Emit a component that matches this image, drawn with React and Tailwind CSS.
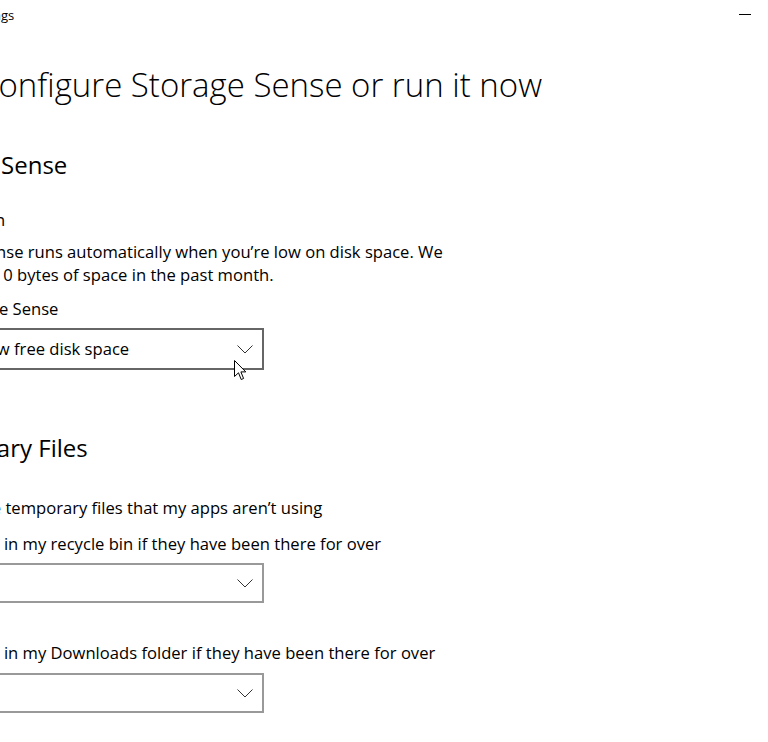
import React from "react";

function Chevron() {
  return (
    <svg width="16" height="9" viewBox="0 0 16 9" className="shrink-0">
      <path d="M0.5 0.5 L8 8 L15.5 0.5" fill="none" stroke="#333" strokeWidth="1" />
    </svg>
  );
}

function Dropdown({ value, hover }) {
  return (
    <div
      className={
        "flex items-center justify-between w-[350px] pl-[10px] pr-[9px] bg-white border-2 " +
        (hover ? "h-[42px] border-[#666666]" : "h-[40px] border-[#999999]")
      }
    >
      <span className="text-[16.6px] text-black whitespace-nowrap">{value}</span>
      <Chevron />
    </div>
  );
}

function Cursor() {
  return (
    <svg width="13" height="21" viewBox="0 0 13 21" className="absolute left-[234px] top-[360px]">
      <path
        d="M0.5 0.5 L0.5 16.5 L4.5 12.8 L7.2 19.5 L9.6 18.5 L6.9 11.9 L11.8 11.9 Z"
        fill="#fff"
        stroke="#000"
        strokeWidth="1"
      />
    </svg>
  );
}

export default function App() {
  return (
    <div
      className="relative w-[768px] h-[742px] overflow-hidden bg-white text-black"
      style={{ fontFamily: '"Open Sans", "Noto Sans", sans-serif' }}
    >
      {/* title bar */}
      <div className="flex justify-between items-center h-[32px]">
        <span className="-ml-[34px] text-[13px] whitespace-nowrap">Settings</span>
        <div className="w-[46px] h-[32px] flex items-center justify-center">
          <div className="w-[12px] h-px bg-black -mt-[3px]" />
        </div>
      </div>

      {/* page title */}
      <h1 className="-ml-[22px] mt-[33px] text-[33px] leading-[40px] font-light whitespace-nowrap">
        Configure Storage Sense or run it now
      </h1>

      <div className="-ml-[86px] flex flex-col">
        <h2 className="-ml-[5px] mt-[44px] text-[24px] leading-[32px] whitespace-nowrap">Storage Sense</h2>

        <div className="mt-[28px] flex items-center gap-[20px]">
          <div className="w-[48px] h-[22px] rounded-full bg-[#0078d7] flex items-center justify-end pr-[5px]">
            <div className="w-[11px] h-[11px] rounded-full bg-white" />
          </div>
          <span className="text-[16.6px] leading-[22px]">On</span>
        </div>

        <p className="mt-[9px] text-[16.6px] leading-[23px] whitespace-nowrap">
          Storage Sense runs automatically when you’re low on disk space. We
          <br />
          cleaned up 0 bytes of space in the past month.
        </p>

        <div className="mt-[12px] text-[16.6px] leading-[22px] whitespace-nowrap">Run Storage Sense</div>
        <div className="mt-[8px]">
          <Dropdown value="During low free disk space" hover />
        </div>

        <h2 className="-ml-[5px] mt-[62px] text-[24px] leading-[32px] whitespace-nowrap">Temporary Files</h2>

        <div className="mt-[33px] flex items-center gap-[15px]">
          <div className="w-[22px] h-[22px] bg-[#0078d7] flex items-center justify-center">
            <svg width="14" height="12" viewBox="0 0 14 12">
              <path d="M1 6.5 L5 10 L13 1.5" fill="none" stroke="#fff" strokeWidth="1.6" />
            </svg>
          </div>
          <span className="text-[16.6px] leading-[22px] whitespace-nowrap">
            Delete temporary files that my apps aren’t using
          </span>
        </div>

        <div className="mt-[14px] text-[16.6px] leading-[22px] whitespace-nowrap">
          Delete files in my recycle bin if they have been there for over
        </div>
        <div className="mt-[8px]">
          <Dropdown value="1 day" />
        </div>

        <div className="mt-[39px] text-[16.6px] leading-[22px] whitespace-nowrap">
          Delete files in my Downloads folder if they have been there for over
        </div>
        <div className="mt-[9px]">
          <Dropdown value="Never" />
        </div>
      </div>

      <Cursor />
    </div>
  );
}
